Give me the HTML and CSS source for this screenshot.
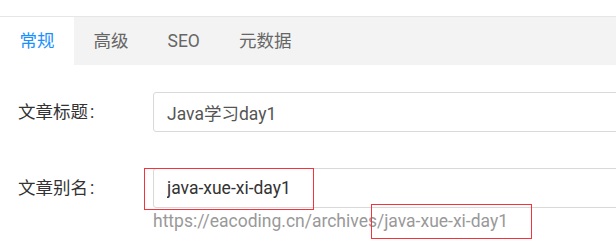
FILE: index.html
```html
<!DOCTYPE html>
<html>
<head>
  <meta charset="utf-8">
  <title>文章设置</title>
  <link rel="stylesheet" href="styles.css">
</head>
<body>
  <div class="tabs">
    <div class="tab active">常规</div>
    <div class="tab">高级</div>
    <div class="tab">SEO</div>
    <div class="tab">元数据</div>
  </div>

  <div class="form">
    <div class="form-item">
      <label class="form-label">文章标题</label>
      <div class="form-control">
        <input class="input" type="text" value="Java学习day1">
      </div>
    </div>

    <div class="form-item">
      <label class="form-label">文章别名</label>
      <div class="form-control">
        <div class="input-wrap marked">
          <input class="input input-dark" type="text" value="java-xue-xi-day1">
        </div>
        <div class="help">https://eacoding.cn/archives<span class="marked-text">/java-xue-xi-day1</span></div>
      </div>
    </div>
  </div>
</body>
</html>
```

FILE: styles.css
```css
body {
  margin: 0;
  padding: 0;
  background-color: #fff;
  font-family: Roboto, "Noto Sans CJK SC", sans-serif;
  font-size: 17.5px;
  overflow-x: hidden;
}

/* 顶部标签栏 */
.tabs {
  margin-top: 16px;
  display: flex;
  height: 48px;
  border-top: 1px solid #e6e6e6;
  background-color: #f3f3f3;
}

.tab {
  padding: 0 19.5px;
  line-height: 48px;
  color: #666;
}

.tab.active {
  background-color: #fff;
  color: #1890ff;
}

/* 表单 */
.form {
  padding: 27px 0 13px 18px;
}

.form-item {
  display: flex;
  margin-bottom: 36px;
}

.form-item:last-child {
  margin-bottom: 0;
}

.form-label {
  width: 135px;
  flex-shrink: 0;
  line-height: 40px;
  color: #333;
}

.form-label::after {
  content: ":";
  margin: 0 8px 0 2px;
}

.form-control {
  flex-shrink: 0;
}

.input-wrap {
  position: relative;
}

.input {
  box-sizing: border-box;
  width: 520px;
  height: 40px;
  padding: 0 13px;
  border: 1px solid #d9d9d9;
  border-radius: 3px;
  font-family: inherit;
  font-size: 17.5px;
  color: #555;
  background-color: #fff;
  outline: none;
}

.input-dark {
  color: #333;
}

.help {
  line-height: 26px;
  color: #999;
}

/* 红框标注 */
.marked::after {
  content: "";
  position: absolute;
  left: -9px;
  top: 0;
  width: 170px;
  height: 42px;
  box-sizing: border-box;
  border: 1.5px solid #f4333c;
}

.marked-text {
  position: relative;
}

.marked-text::after {
  content: "";
  position: absolute;
  left: -6px;
  right: -24px;
  top: -7px;
  bottom: -8px;
  border: 1.5px solid #f4333c;
}
```
